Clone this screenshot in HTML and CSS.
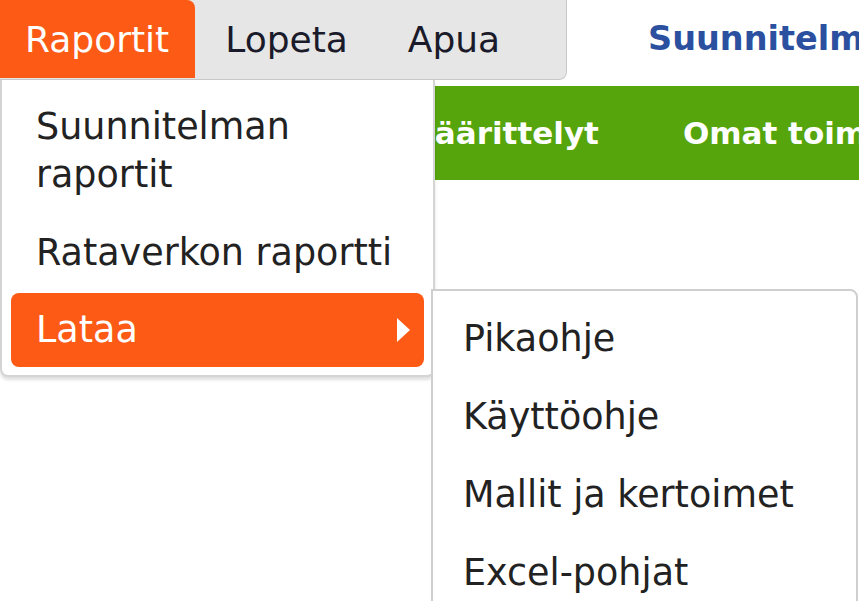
FILE: index.html
```html
<!DOCTYPE html>
<html lang="fi">

<head>
    <meta charset="UTF-8">
    <meta name="viewport" content="width=device-width, initial-scale=1.0">
    <title>Suunnitelma</title>
    <link rel="stylesheet" href="styles.css">
</head>

<body>
    <header class="topbar">
        <nav class="menubar">
            <a class="menu-item active" href="#">Raportit</a>
            <a class="menu-item" href="#">Lopeta</a>
            <a class="menu-item" href="#">Apua</a>
        </nav>
        <h1 class="title">Suunnitelma</h1>
    </header>

    <nav class="greenbar">
        <a class="green-item" href="#">Määrittelyt</a>
        <a class="green-item" href="#">Omat toimenpiteet</a>
    </nav>

    <main class="content"></main>

    <ul class="dropdown">
        <li class="drop-item">Suunnitelman<br>raportit</li>
        <li class="drop-item">Rataverkon raportti</li>
        <li class="drop-item selected">
            <span>Lataa</span>
            <span class="arrow"></span>
        </li>
    </ul>

    <ul class="submenu">
        <li class="drop-item">Pikaohje</li>
        <li class="drop-item">Käyttöohje</li>
        <li class="drop-item">Mallit ja kertoimet</li>
        <li class="drop-item">Excel-pohjat</li>
    </ul>
</body>
</html>
```

FILE: styles.css
```css
body {
    margin: 0;
    padding: 0;
    background: white;
    font-family: "DejaVu Sans", Verdana, sans-serif;
    color: #222;
    overflow: hidden;
    height: 601px;
}

a {
    text-decoration: none;
    color: inherit;
}

.topbar {
    display: flex;
    align-items: flex-start;
    height: 86px;
}

.menubar {
    display: flex;
    flex-shrink: 0;
    width: 567px;
    height: 80px;
    background: #e6e6e6;
    border-right: 1px solid #c8c8c8;
    border-bottom: 1px solid #c8c8c8;
    border-bottom-right-radius: 8px;
    box-sizing: border-box;
}

.menu-item {
    display: flex;
    align-items: center;
    padding: 0 30px;
    font-size: 36px;
    color: #1a1a2a;
}

.menu-item.active {
    background: #fd5a16;
    color: white;
    padding: 0 26px 0 25px;
    border-top-right-radius: 8px;
    height: 78px;
}

.title {
    margin: 19px 0 0 81px;
    font-size: 33.5px;
    font-weight: bold;
    color: #2c50a0;
    white-space: nowrap;
}

.greenbar {
    display: flex;
    align-items: center;
    height: 94px;
    background: #56a50c;
    padding-left: 404px;
    gap: 84px;
}

.green-item {
    color: white;
    font-size: 31px;
    font-weight: bold;
    white-space: nowrap;
}

.dropdown,
.submenu {
    list-style: none;
    margin: 0;
    position: absolute;
    background: white;
    box-sizing: border-box;
}

.dropdown {
    top: 80px;
    left: 0;
    width: 435px;
    padding: 8px 9px;
    border: 2px solid #d4d4d4;
    border-top: none;
    border-radius: 0 0 8px 8px;
    box-shadow: 0 3px 3px rgba(0, 0, 0, 0.12);
}

.submenu {
    top: 289px;
    left: 431px;
    width: 427px;
    height: 330px;
    padding: 9px 9px;
    border: 2px solid #cfcfcf;
    border-top-right-radius: 8px;
}

.drop-item {
    font-size: 36.5px;
    line-height: 48px;
    padding: 15px 20px 15px 25px;
    color: #222;
    white-space: nowrap;
}

.submenu .drop-item {
    padding-left: 21px;
}

.selected {
    display: flex;
    justify-content: space-between;
    align-items: center;
    background: #fd5a16;
    color: white;
    border-radius: 8px;
    padding: 13px 14px 13px 25px;
    margin-top: 1px;
}

.arrow {
    width: 0;
    height: 0;
    border-top: 12px solid transparent;
    border-bottom: 12px solid transparent;
    border-left: 13px solid white;
}
```
